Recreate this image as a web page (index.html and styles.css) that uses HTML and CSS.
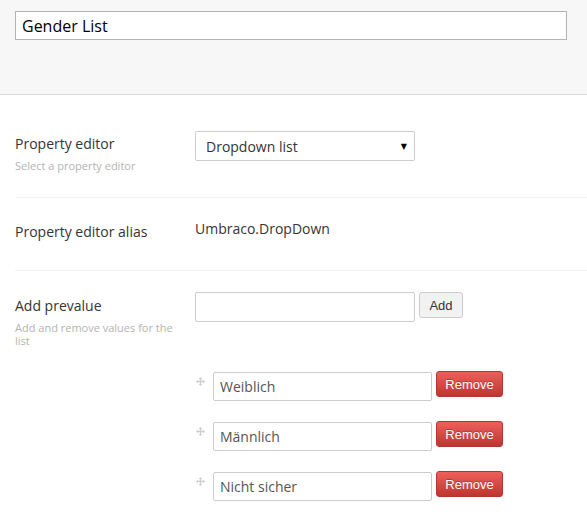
FILE: index.html
```html
<!DOCTYPE html>
<html>
<head>
<meta charset="utf-8">
<link rel="stylesheet" href="styles.css">
</head>
<body>
<div class="header">
  <input class="name-input" type="text" value="Gender List">
</div>
<div class="content">
  <div class="group group-first">
    <div class="label">
      <div class="label-title">Property editor</div>
      <div class="label-desc">Select a property editor</div>
    </div>
    <div class="control">
      <div class="select">
        <span>Dropdown list</span>
        <span class="caret">&#9660;</span>
      </div>
    </div>
  </div>
  <div class="group group-alias">
    <div class="label">
      <div class="label-title">Property editor alias</div>
    </div>
    <div class="control alias">Umbraco.DropDown</div>
  </div>
  <div class="group group-last">
    <div class="label">
      <div class="label-title">Add prevalue</div>
      <div class="label-desc desc-wrap">Add and remove values for the list</div>
    </div>
    <div class="control">
      <div class="add-row">
        <input class="text-input" type="text" value="">
        <button class="btn-add">Add</button>
      </div>
      <div class="values">
        <div class="value-row">
          <svg class="drag" width="9" height="9" viewBox="0 0 9 9"><path d="M4.5 0 L6.5 2 H5.2 V3.8 H7 V2.5 L9 4.5 L7 6.5 V5.2 H5.2 V7 H6.5 L4.5 9 L2.5 7 H3.8 V5.2 H2 V6.5 L0 4.5 L2 2.5 V3.8 H3.8 V2 H2.5 Z" fill="#d0d0d0"/></svg>
          <input class="text-input value-input" type="text" value="Weiblich">
          <button class="btn-remove">Remove</button>
        </div>
        <div class="value-row">
          <svg class="drag" width="9" height="9" viewBox="0 0 9 9"><path d="M4.5 0 L6.5 2 H5.2 V3.8 H7 V2.5 L9 4.5 L7 6.5 V5.2 H5.2 V7 H6.5 L4.5 9 L2.5 7 H3.8 V5.2 H2 V6.5 L0 4.5 L2 2.5 V3.8 H3.8 V2 H2.5 Z" fill="#d0d0d0"/></svg>
          <input class="text-input value-input" type="text" value="Männlich">
          <button class="btn-remove">Remove</button>
        </div>
        <div class="value-row">
          <svg class="drag" width="9" height="9" viewBox="0 0 9 9"><path d="M4.5 0 L6.5 2 H5.2 V3.8 H7 V2.5 L9 4.5 L7 6.5 V5.2 H5.2 V7 H6.5 L4.5 9 L2.5 7 H3.8 V5.2 H2 V6.5 L0 4.5 L2 2.5 V3.8 H3.8 V2 H2.5 Z" fill="#d0d0d0"/></svg>
          <input class="text-input value-input" type="text" value="Nicht sicher">
          <button class="btn-remove">Remove</button>
        </div>
      </div>
    </div>
  </div>
</div>
</body>
</html>
```

FILE: styles.css
```css
* { box-sizing: border-box; }
body {
  margin: 0;
  font-family: "Open Sans", "Liberation Sans", sans-serif;
  color: #343434;
  background: #fff;
}
.header {
  height: 95px;
  background: #f7f7f7;
  border-bottom: 1px solid #d9d9d9;
  padding: 11px 20px 0 15px;
}
.name-input {
  display: block;
  width: 552px;
  height: 29px;
  border: 1px solid #b3b3b3;
  background: #fff;
  font-family: "Open Sans", sans-serif;
  font-size: 16px;
  color: #000;
  padding: 0 6px;
  margin: 0;
  outline: none;
}
.content {
  padding-left: 15px;
}
.group {
  display: grid;
  grid-template-columns: 180px 1fr;
  border-bottom: 1px solid #f3f3f3;
}
.group-first { padding: 36px 0 26px; }
.group-alias { padding: 21px 0 28px; }
.group-last { border-bottom: none; padding-top: 21px; }
.label-title {
  font-size: 14px;
  line-height: 20px;
  color: #343434;
}
.group-first .label-title { padding-top: 3px; }
.group-alias .label-title { padding-top: 3px; }
.group-last .label-title { padding-top: 4px; }
.label-desc {
  font-size: 11px;
  line-height: 13px;
  color: #b3b3b3;
  margin-top: 5px;
}
.group-first .label-desc { margin-bottom: -1px; }
.desc-wrap { width: 165px; margin-top: 5px; }
.select {
  width: 220px;
  height: 30px;
  border: 1px solid #ccc;
  border-radius: 2px;
  display: flex;
  align-items: center;
  justify-content: space-between;
  padding: 0 7px 0 10px;
  font-size: 14px;
  color: #343434;
}
.caret {
  font-size: 8px;
  color: #000;
  font-family: "DejaVu Sans", sans-serif;
}
.alias {
  font-size: 14px;
  line-height: 20px;
  color: #343434;
}
.add-row {
  display: flex;
  align-items: flex-start;
  gap: 4px;
}
.text-input {
  width: 220px;
  height: 30px;
  border: 1px solid #ccc;
  border-radius: 2px;
  margin: 0;
  padding: 0 6px;
  font-family: "Open Sans", sans-serif;
  font-size: 14px;
  color: #555;
  outline: none;
  background: #fff;
}
.btn-add {
  height: 26px;
  width: 44px;
  margin: 0;
  padding: 0;
  border: 1px solid #ccc;
  border-radius: 3px;
  background: #f2f2f2;
  font-family: "Liberation Sans", Arial, sans-serif;
  font-size: 13px;
  color: #333;
}
.values {
  margin-top: 49px;
  display: flex;
  flex-direction: column;
  gap: 20px;
}
.value-row {
  display: flex;
  align-items: flex-start;
}
.drag {
  margin: 6px 8px 0 1px;
  flex: none;
}
.value-input {
  width: 219px;
  height: 29px;
  margin-top: 1px;
  padding: 0 6px;
}
.btn-remove {
  margin-left: 4px;
  width: 67px;
  height: 26px;
  padding: 0;
  border: 1px solid #b33630;
  border-radius: 3px;
  background: linear-gradient(#ee5f5b, #bd362f);
  color: #fff;
  font-family: "Liberation Sans", Arial, sans-serif;
  font-size: 13px;
  text-shadow: 0 -1px 0 rgba(0,0,0,0.25);
}
```
